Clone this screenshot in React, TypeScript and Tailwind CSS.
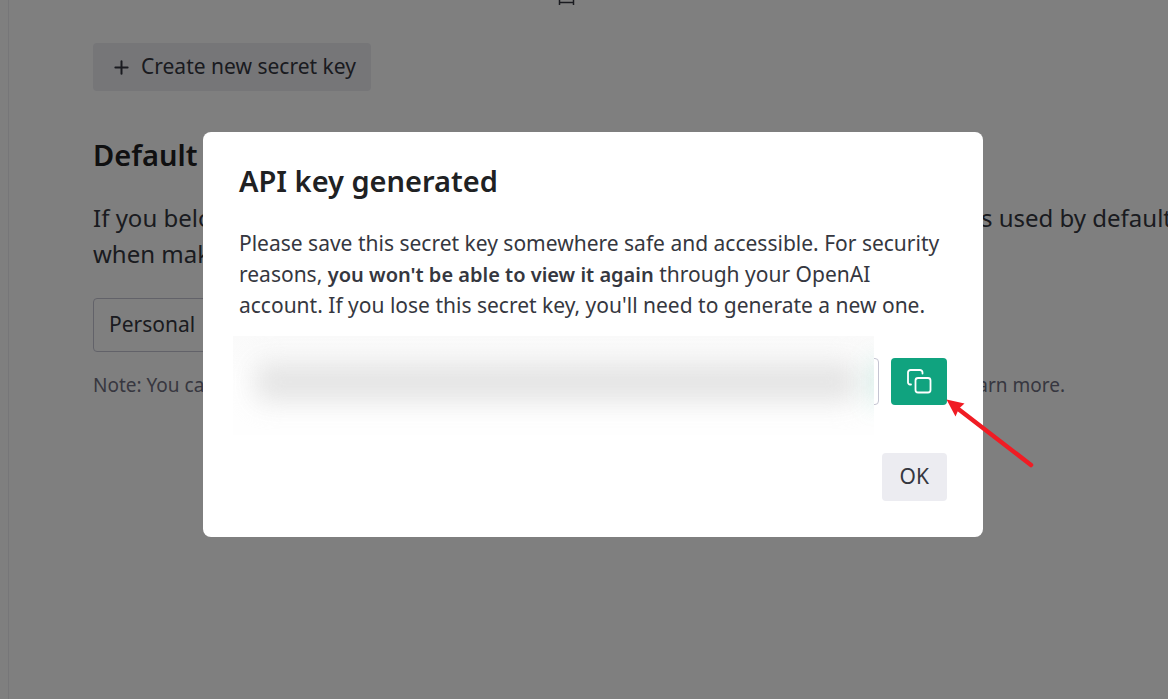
import { Plus } from "lucide-react";

function Page() {
  return (
    <div className="ml-2 min-h-screen border-l border-[#ececf1] bg-white pl-[84px] text-[#353740]">
      <div className="flex h-[43px] items-start pl-[465px]">
        <svg width="18" height="6" viewBox="0 0 18 6" fill="none" stroke="currentColor" strokeWidth="1.5" aria-hidden="true">
          <path d="M1.500 0V5M15.500 0V5M1.500 2.500H15.500" />
        </svg>
      </div>
      <button className="flex h-12 items-center gap-[9px] rounded bg-[#ececf1] pr-[15px] pl-[18px] text-[21px]">
        <Plus size={21} strokeWidth={2.3} />
        Create new secret key
      </button>
      <h2 className="mt-[45px] text-[29px] leading-[38px] font-semibold text-[#202123]">Default organization</h2>
      <div className="mt-[26px] text-[24px] leading-[36px]">
        <p className="-mr-1 flex justify-between whitespace-nowrap">
          <span>If you belong to multiple organizations</span>
          <span>is used by default</span>
        </p>
        <p>when making requests with the API keys above.</p>
      </div>
      <select
        aria-label="Default organization"
        className="mt-[26px] block h-[54px] w-[460px] appearance-none rounded border border-[#c5c5d2] bg-white px-[15px] text-[21px]"
      >
        <option>Personal</option>
      </select>
      <p className="mt-[18px] flex max-w-[972px] justify-between text-[19px] leading-[30px] text-[#6e6e80]">
        <span>Note: You can also specify which organization to use for each request.</span>
        <span>Learn more.</span>
      </p>
    </div>
  );
}

function CopyIcon() {
  return (
    <svg width="26" height="26" viewBox="0 0 26 26" fill="none" stroke="currentColor" strokeWidth="1.8" strokeLinecap="round" strokeLinejoin="round" aria-hidden="true">
      <rect x="9.5" y="9" width="15" height="14.5" rx="2.5" />
      <path d="M5 15.500H4a2 2 0 0 1-2-2V3.500a2.500 2.500 0 0 1 2.500-2.500h9.500A2.500 2.500 0 0 1 16.500 3.500v1" />
    </svg>
  );
}

function Dialog() {
  return (
    <div role="dialog" aria-labelledby="title" className="w-[780px] rounded-lg bg-white p-9 text-[21px] text-[#353740]">
      <h1 id="title" className="text-[29px] leading-[26px] font-semibold text-[#202123]">API key generated</h1>
      <p className="mt-[34px] leading-[31px]">
        Please save this secret key somewhere safe and accessible. For security reasons,{" "}
        <strong className="text-[20px] font-semibold">you won't be able to view it again</strong> through your OpenAI
        account. If you lose this secret key, you'll need to generate a new one.
      </p>
      <div className="relative mt-[37px] flex gap-3">
        <input aria-label="Secret key" readOnly className="h-[47px] min-w-0 grow rounded border border-[#c5c5d2] bg-white px-4" />
        <button aria-label="Copy" className="flex h-[47px] w-14 items-center justify-center rounded bg-[#10a37f] text-white">
          <CopyIcon />
        </button>
        <div className="absolute -top-[22px] -left-[6px] h-[99px] w-[641px] overflow-hidden bg-linear-to-b from-[#fafafa] via-[#fefefe] to-[#fefefe]">
          <div className="absolute top-[26px] left-[22px] h-[40px] w-[602px] rounded-lg bg-[#e2e2e2] opacity-90 blur-[13px]" />
          <div className="absolute top-[24px] -right-[10px] h-[44px] w-[12px] bg-[#10a37f]/25 blur-md" />
        </div>
      </div>
      <div className="mt-12 flex justify-end">
        <button className="h-12 rounded bg-[#ececf1] px-[18px]">OK</button>
      </div>
    </div>
  );
}

export default function App() {
  return (
    <div className="relative h-screen overflow-hidden font-['Noto_Sans',sans-serif]">
      <Page />
      <div className="absolute inset-0 flex items-start justify-center bg-black/50 pt-[132px] pl-[18px]">
        <div className="relative">
          <Dialog />
          <svg className="absolute top-[265px] left-[742px]" width="92" height="72" viewBox="0 0 92 72" aria-hidden="true">
            <path d="M12 11L86 68" stroke="#f01c24" strokeWidth="4.500" strokeLinecap="round" />
            <path d="M1.500 2.500L19.500 6.500L14 11.500L10.500 19.500Z" fill="#f01c24" />
          </svg>
        </div>
      </div>
    </div>
  );
}
